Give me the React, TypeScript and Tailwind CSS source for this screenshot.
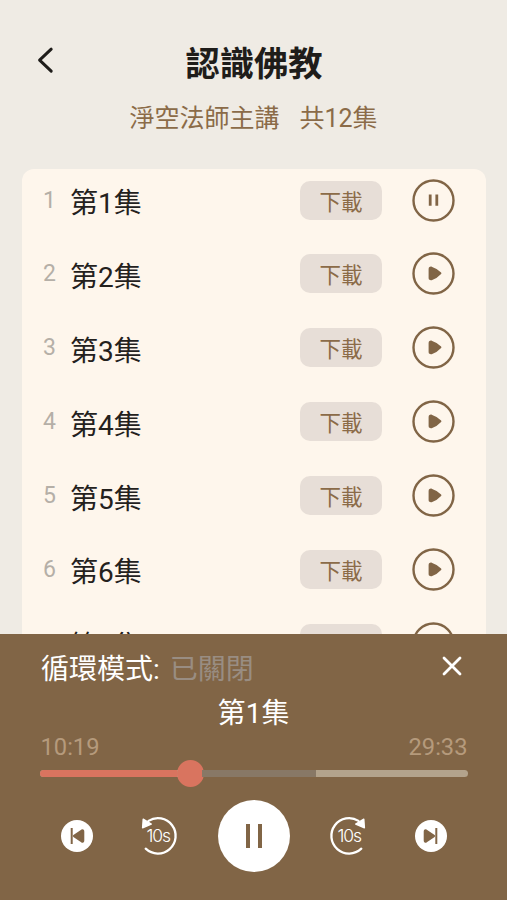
import { useState } from 'react';

const episodes = [1, 2, 3, 4, 5, 6, 7];

export default function App() {
  const [current, setCurrent] = useState(1);

  return (
    <div className="flex h-[900px] w-[507px] flex-col overflow-hidden bg-[#efebe4] font-['Roboto','Noto_Sans_CJK_TC',sans-serif]">
      {/* Header */}
      <header className="flex h-[169px] shrink-0 flex-col">
        <div className="mt-[38px] grid h-[52px] grid-cols-[92px_1fr_92px] items-center">
          <button className="ml-[36px] -mt-[9px] w-5" aria-label="返回">
            <svg className="h-7 w-5" viewBox="0 0 20 28" fill="none" stroke="#1f1d1a" strokeWidth="3" strokeLinecap="round" strokeLinejoin="round">
              <path d="M15.2 3.2 L3.6 14.2 L15.2 25.2" />
            </svg>
          </button>
          <h1 className="pl-[1px] text-center text-[34.3px] leading-[52px] font-bold text-[#1f1d1a]">認識佛教</h1>
        </div>
        <p className="flex justify-center gap-[20px] pt-[11px] text-[25px] leading-[36px] text-[#8b6b48]">
          <span>淨空法師主講</span>
          <span>共12集</span>
        </p>
      </header>

      {/* Episodes */}
      <main className="mr-[21px] ml-[22px] h-[465px] shrink-0 overflow-hidden rounded-t-[12px] bg-[#fef6ec]">
        {episodes.map((n) => (
          <EpisodeRow key={n} number={n} playing={n === current} onPlay={() => setCurrent(n)} />
        ))}
      </main>

      <Player current={current} />
    </div>
  );
}

function EpisodeRow({ number, playing, onPlay }: { number: number; playing: boolean; onPlay: () => void }) {
  return (
    <div className="mb-[11.9px] flex h-[62px] items-center pr-[31px] pl-[21px]">
      <span className="w-[27px] pt-[1px] text-[23px] leading-[30px] text-[#b5afa7]">{number}</span>
      <span className="flex-1 pt-[8px] text-[28px] leading-[40px] text-[#24211d]">第{number}集</span>
      <button className="mr-[30px] h-[39px] w-[82px] rounded-[10px] bg-[#e7ded7] pt-[5px] text-[21.5px] leading-[34px] text-[#8b6b48]">
        下載
      </button>
      <button onClick={onPlay} aria-label={playing ? '暫停' : '播放'}>
        <svg className="h-[43px] w-[43px]" viewBox="0 0 43 43" fill="none">
          <circle cx="21.5" cy="21.5" r="20" stroke="#816546" strokeWidth="2.4" />
          {playing ? (
            <path d="M18.2 15.5V26.8 M24.8 15.5V26.8" stroke="#816546" strokeWidth="2.8" />
          ) : (
            <path d="M17.8 16.9 Q17.8 15.5 19.3 15.8 Q24.8 17.6 28.2 21.3 Q24.8 25.2 19.3 27 Q17.8 27.3 17.8 25.9 Z" fill="#816546" stroke="#816546" strokeWidth="2.4" strokeLinejoin="round" />
          )}
        </svg>
      </button>
    </div>
  );
}

function Player({ current }: { current: number }) {
  return (
    <footer className="flex h-[266px] shrink-0 flex-col bg-[#816546] text-white">
      <div className="flex h-[58px] items-center justify-between pr-[45px] pl-[41px]">
        <p className="pt-[14px] text-[28px] leading-[40px]">
          循環模式: <span className="ml-[3px] text-[#998d82]">已關閉</span>
        </p>
        <button className="pt-[6px]" aria-label="關閉">
          <svg className="h-5 w-5" viewBox="0 0 20 20" stroke="#fff" strokeWidth="2.8" strokeLinecap="round">
            <path d="M2 2 L18 18 M18 2 L2 18" />
          </svg>
        </button>
      </div>
      <p className="mt-[2px] text-center text-[28px] leading-[40px]">第{current}集</p>

      {/* Progress */}
      <div className="-mt-[2px] flex justify-between pr-[39.5px] pl-[40.5px] text-[23.7px] leading-[30px] text-[#b59a7c]">
        <span>10:19</span>
        <span>29:33</span>
      </div>
      <div className="mt-[8px] mr-[39px] ml-[40px] flex h-[7px] items-center overflow-visible rounded-full bg-[#b3a38c]">
        <div className="h-[7px] w-[137px] rounded-l-full bg-[#d9745f]" />
        <div className="size-[27px] shrink-0 rounded-full bg-[#d9745f]" />
        <div className="-ml-[2px] h-[7px] w-[114px] bg-[#887866]" />
      </div>

      {/* Controls */}
      <div className="mt-[23px] flex h-[72px] items-center pl-[61px]">
        <button aria-label="上一集">
          <SkipIcon />
        </button>
        <button className="mr-[40px] ml-[45px]" aria-label="後退10秒">
          <SeekIcon />
        </button>
        <button className="flex size-[72px] items-center justify-center gap-[8px] rounded-full bg-white" aria-label="暫停">
          <span className="h-[24px] w-[4px] bg-[#816546]" />
          <span className="h-[24px] w-[4px] bg-[#816546]" />
        </button>
        <button className="mr-[46px] ml-[39px]" aria-label="前進10秒">
          <SeekIcon forward />
        </button>
        <button aria-label="下一集">
          <SkipIcon forward />
        </button>
      </div>
    </footer>
  );
}

function SkipIcon({ forward = false }: { forward?: boolean }) {
  return (
    <svg className="size-8" viewBox="0 0 32 32">
      <circle cx="16" cy="16" r="16" fill="#fff" />
      <g transform={forward ? 'matrix(-1 0 0 1 32 0)' : undefined} fill="#816546" stroke="#816546" strokeLinejoin="round">
        <path d="M10.7 8V24" strokeWidth="2" />
        <path d="M13 16 L20.8 10.6 Q22.2 10 22.2 11.4 V20.6 Q22.2 22 20.8 21.4 Z" strokeWidth="2.2" />
      </g>
    </svg>
  );
}

function SeekIcon({ forward = false }: { forward?: boolean }) {
  return (
    <svg className="size-10 overflow-visible" viewBox="0 0 40 40">
      <g transform={forward ? 'matrix(-1 0 0 1 40 0)' : undefined}>
        <path d="M7.7 32.7 A17.7 17.7 0 1 0 10.5 4.9" fill="none" stroke="#fff" strokeWidth="2.3" strokeLinecap="round" />
        <path d="M5.2 3.2 L13.3 8 L4.6 11.8 Z" fill="#fff" stroke="#fff" strokeWidth="1.4" strokeLinejoin="round" />
      </g>
      <text x="20.3" y="26.2" textAnchor="middle" fill="#fff" fontSize="17.5" fontWeight="300" letterSpacing="-1" className="font-['Inter',sans-serif]">
        10s
      </text>
    </svg>
  );
}
